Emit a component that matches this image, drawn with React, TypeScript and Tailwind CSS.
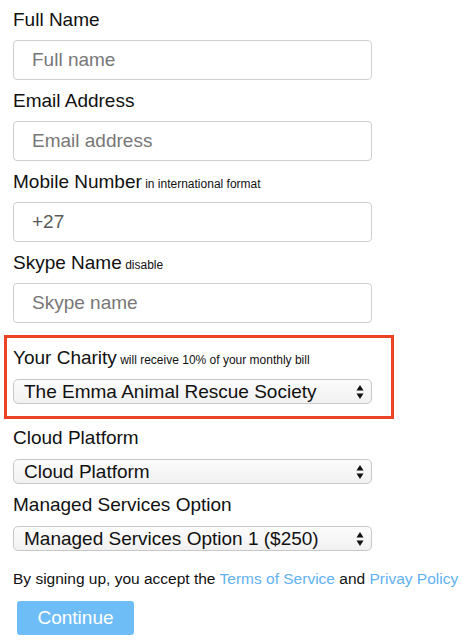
import React from "react";

const font = { fontFamily: '"Liberation Sans", Arial, Helvetica, sans-serif' };

function Arrows() {
  return (
    <svg width="8" height="16" viewBox="0 0 8 16" className="shrink-0">
      <path d="M4 1 L7.5 6.5 L0.5 6.5 Z" fill="#111" />
      <path d="M4 15 L7.5 9.5 L0.5 9.5 Z" fill="#111" />
    </svg>
  );
}

function FakeSelect({ value }: { value: string }) {
  return (
    <div className="flex h-[25px] w-[359px] items-center justify-between rounded-[5px] border border-[#c8c8c8] bg-gradient-to-b from-[#fcfcfc] to-[#f1f1f1] pl-[10px] pr-[7px]">
      <span className="text-[19px] leading-[22px] text-[#111]">{value}</span>
      <Arrows />
    </div>
  );
}

function TextInput({ placeholder, value }: { placeholder: string; value?: string }) {
  return (
    <input
      type="text"
      placeholder={placeholder}
      defaultValue={value}
      className="block h-[40px] w-[359px] rounded-[4px] border border-[#cfcfcf] bg-white pl-[18px] text-[19px] text-[#5a5a5a] outline-none placeholder:text-[#777]"
      style={font}
    />
  );
}

function Label({ title, note }: { title: string; note?: string }) {
  return (
    <div className="h-[20px] whitespace-nowrap text-[19px] leading-[20px] text-[#111]">
      {title}
      {note ? <span className="text-[12px]"> {note}</span> : null}
    </div>
  );
}

export default function App() {
  return (
    <div className="min-h-[640px] w-[466px] bg-white pl-[4px] pt-[10px]" style={font}>
      <div className="pl-[9px]">
        <Label title="Full Name" />
        <div className="mt-[10px]">
          <TextInput placeholder="Full name" />
        </div>
        <div className="mt-[11px]">
          <Label title="Email Address" />
        </div>
        <div className="mt-[10px]">
          <TextInput placeholder="Email address" />
        </div>
        <div className="mt-[11px]">
          <Label title="Mobile Number" note="in international format" />
        </div>
        <div className="mt-[10px]">
          <TextInput placeholder="" value="+27" />
        </div>
        <div className="mt-[11px]">
          <Label title="Skype Name" note="disable" />
        </div>
        <div className="mt-[10px]">
          <TextInput placeholder="Skype name" />
        </div>
      </div>

      <div className="mt-[12px] w-[390px] border-[3px] border-[#ea4325] pb-[12px] pl-[6px] pt-[10px]">
        <Label title="Your Charity" note="will receive 10% of your monthly bill" />
        <div className="mt-[11px]">
          <FakeSelect value="The Emma Animal Rescue Society" />
        </div>
      </div>

      <div className="pl-[9px]">
        <div className="mt-[9px]">
          <Label title="Cloud Platform" />
        </div>
        <div className="mt-[11px]">
          <FakeSelect value="Cloud Platform" />
        </div>
        <div className="mt-[11px]">
          <Label title="Managed Services Option" />
        </div>
        <div className="mt-[11px]">
          <FakeSelect value="Managed Services Option 1 ($250)" />
        </div>
        <div className="mt-[19px] whitespace-nowrap text-[15.5px] leading-[18px] text-[#111]">
          By signing up, you accept the{" "}
          <a className="text-[#62b1f0]">Terms of Service</a> and{" "}
          <a className="text-[#62b1f0]">Privay Policy</a>
        </div>
        <button
          type="button"
          className="ml-[4px] mt-[13px] flex h-[34px] w-[117px] items-center justify-center rounded-[3px] bg-[#6fbdf7] text-[19px] text-white"
          style={font}
        >
          Continue
        </button>
      </div>
    </div>
  );
}
